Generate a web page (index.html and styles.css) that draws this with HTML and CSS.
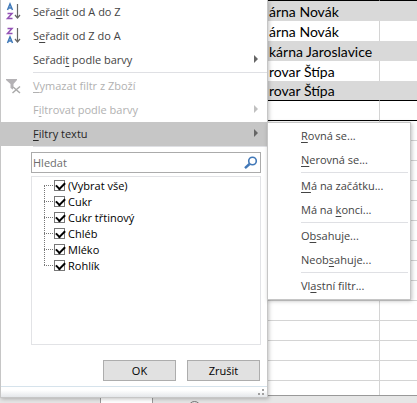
FILE: index.html
```html
<!DOCTYPE html>
<html lang="cs">
    <head>
        <meta charset="UTF-8" />
        <meta
            name="viewport"
            content="width=device-width, initial-scale=1.0"
        />
        <title>Filtr</title>
        <link rel="stylesheet" href="styles.css">
    </head>
    <body>
        <table class="sheet">
            <tr class="band first">
                <td>árna Novák</td>
                <td></td>
            </tr>
            <tr>
                <td>árna Novák</td>
                <td></td>
            </tr>
            <tr class="band">
                <td>kárna Jaroslavice</td>
                <td></td>
            </tr>
            <tr>
                <td>rovar Štípa</td>
                <td></td>
            </tr>
            <tr class="band last">
                <td>rovar Štípa</td>
                <td></td>
            </tr>
            <tr class="total">
                <td></td>
                <td></td>
            </tr>
            <tr class="empty"><td></td><td></td></tr>
            <tr class="empty"><td></td><td></td></tr>
            <tr class="empty"><td></td><td></td></tr>
            <tr class="empty"><td></td><td></td></tr>
            <tr class="empty"><td></td><td></td></tr>
            <tr class="empty"><td></td><td></td></tr>
            <tr class="empty"><td></td><td></td></tr>
            <tr class="empty"><td></td><td></td></tr>
            <tr class="empty"><td></td><td></td></tr>
            <tr class="empty"><td></td><td></td></tr>
            <tr class="empty"><td></td><td></td></tr>
            <tr class="empty"><td></td><td></td></tr>
            <tr class="empty"><td></td><td></td></tr>
            <tr class="cut"><td></td><td></td></tr>
        </table>
        <div class="tabs">
            <div class="tab"></div>
            <div class="new-tab"></div>
        </div>

        <div class="menu filter-menu">
            <button class="item" type="button">
                <svg class="icon" width="20" height="20" viewBox="0 0 20 20" fill="none">
                    <path d="M2.500 8 5 2 7.500 8M3.500 6h3" stroke="#3e78b8" stroke-width="1.500" />
                    <path d="M2.500 11.500h4.500L2.500 16.500h5" stroke="#9352b5" stroke-width="1.500" />
                    <path d="M12.500 2v14M10 13l2.500 3 2.500-3" stroke="#666" stroke-width="1.200" />
                </svg>
                <span>Seřa<u>d</u>it od A do Z</span>
            </button>
            <button class="item" type="button">
                <svg class="icon" width="20" height="20" viewBox="0 0 20 20" fill="none">
                    <path d="M2.500 2.500h4.500L2.500 7.500h5" stroke="#9352b5" stroke-width="1.500" />
                    <path d="M2.500 17 5 11l2.500 6M3.500 15h3" stroke="#3e78b8" stroke-width="1.500" />
                    <path d="M12.500 2v14M10 13l2.500 3 2.500-3" stroke="#666" stroke-width="1.200" />
                </svg>
                <span>S<u>e</u>řadit od Z do A</span>
            </button>
            <button class="item more" type="button"><span>Seřadi<u>t</u> podle barvy</span></button>
            <hr />
            <button class="item" type="button" disabled>
                <svg class="icon" width="20" height="20" viewBox="0 0 20 20" fill="none">
                    <path d="M1 3h11v1L8.500 8V14L5.500 12V8L1 4z" fill="#b4b2b5" />
                    <path d="M8 10h6v7H8z" fill="#fff" />
                    <path d="m7.500 10.500 7.500 6.500M15 10.500l-7.500 6.500" stroke="#aaa" stroke-width="1.500" />
                </svg>
                <span><u>V</u>ymazat filtr z Zboží</span>
            </button>
            <button class="item more" type="button" disabled><span>F<u>i</u>ltrovat podle barvy</span></button>
            <button class="item more active" type="button"><span><u>F</u>iltry textu</span></button>
            <hr />

            <form action="#">
                <div class="search">
                    <input type="text" name="search" placeholder="Hledat" aria-label="Hledat" />
                    <svg width="14" height="14" viewBox="0 0 14 14" fill="none" stroke="#4178b8">
                        <circle cx="8.500" cy="5" r="3.800" stroke-width="1.600" />
                        <path d="M5.500 8 1 12.200" stroke-width="2.400" />
                    </svg>
                </div>
                <div class="values">
                    <label><input type="checkbox" name="value" value="all" checked />(Vybrat vše)</label>
                    <label><input type="checkbox" name="value" value="cukr" checked />Cukr</label>
                    <label><input type="checkbox" name="value" value="cukr-trtinovy" checked />Cukr třtinový</label>
                    <label><input type="checkbox" name="value" value="chleb" checked />Chléb</label>
                    <label><input type="checkbox" name="value" value="mleko" checked />Mléko</label>
                    <label><input type="checkbox" name="value" value="rohlik" checked />Rohlík</label>
                </div>
                <div class="button-area">
                    <button type="submit">OK</button>
                    <button type="reset">Zrušit</button>
                </div>
            </form>
            <div class="resize">
                <svg width="6" height="6" viewBox="0 0 6 6" fill="#a0a0a0">
                    <path d="M4 0h2v2H4zM4 4h2v2H4zM0 4h2v2H0z" />
                </svg>
            </div>
        </div>

        <div class="menu submenu">
            <button class="item" type="button"><span><u>R</u>ovná se...</span></button>
            <button class="item" type="button"><span><u>N</u>erovná se...</span></button>
            <hr />
            <button class="item" type="button"><span><u>M</u>á na začátku...</span></button>
            <button class="item" type="button"><span>Má na <u>k</u>onci...</span></button>
            <hr />
            <button class="item" type="button"><span>O<u>b</u>sahuje...</span></button>
            <button class="item" type="button"><span>Neob<u>s</u>ahuje...</span></button>
            <hr />
            <button class="item" type="button"><span>Vl<u>a</u>stní filtr...</span></button>
        </div>
    </body>
</html>
```
FILE: styles.css
```css
* {
    box-sizing: border-box;
}

body {
    position: relative;
    margin: 0;
    overflow: hidden;
    background-color: #e6e6e6;
    font-family: "Open Sans", "Noto Sans", sans-serif;
    font-size: 11px;
}

/* sheet */
.sheet {
    width: 100%;
    table-layout: fixed;
    border-spacing: 0;
    background-color: white;
    border-bottom: 1px solid #999;
}

.sheet td {
    height: 20px;
    padding: 0;
    line-height: 19px;
    font-family: Lato, "Open Sans", sans-serif;
    font-size: 14px;
    color: black;
    white-space: nowrap;
}

.sheet td:first-child {
    width: 380px;
    padding-left: 269px;
    border-right: 1px solid #d4d4d4;
}

.sheet .band td {
    background-color: #d9d9d9;
    border-right-color: #d9d9d9;
}

.sheet .first td {
    height: 21px;
    border-top: 1px solid black;
}

.sheet .last td,
.sheet .total td {
    border-bottom: 1px solid black;
}

.sheet .empty td {
    border-bottom: 1px solid #d4d4d4;
}

.sheet .cut td {
    height: 14px;
}

.tabs {
    display: flex;
    height: 8px;
    padding-left: 100px;
}

.tab {
    width: 53px;
    background-color: white;
    border: 1px solid #999;
    border-width: 0 1px;
}

.new-tab {
    width: 13px;
    height: 13px;
    margin: 5px 0 0 35px;
    border: 1px solid #777;
    border-radius: 50%;
}

/* menus */
.menu {
    position: absolute;
    background-color: white;
    border: 1px solid #c6c6c6;
    box-shadow: 1px 1px 4px rgba(0, 0, 0, 0.25);
}

.filter-menu {
    top: 0;
    left: 0;
    width: 268px;
    border-top: none;
}

.submenu {
    top: 122px;
    left: 267px;
    width: 144px;
    padding: 1px;
}

.item {
    display: flex;
    align-items: center;
    position: relative;
    width: 100%;
    height: 24px;
    padding: 0 9px 2px 32px;
    border: none;
    background: none;
    font: inherit;
    color: #444;
    text-align: left;
    white-space: nowrap;
}

.item:disabled {
    color: #b1b1b1;
}

.item.active {
    background-color: #c6c6c6;
    color: #262626;
}

.item u {
    text-underline-offset: 2px;
}

.icon {
    position: absolute;
    left: 4px;
    top: 2px;
}

.more::after {
    content: "";
    margin-left: auto;
    border: 4px solid transparent;
    border-left-color: #666;
    border-right: none;
}

.more:disabled::after {
    border-left-color: #c0c0c0;
}

.menu hr {
    height: 2px;
    margin: 0 0 0 32px;
    border: none;
    border-top: 1px solid #dfe0e4;
}

.submenu hr {
    margin-right: 1px;
}

form {
    padding: 4px 6px 5px 30px;
}

.search {
    display: flex;
    align-items: center;
    height: 21px;
    padding-right: 2px;
    border: 1px solid #ababab;
}

.search input {
    flex: 1;
    min-width: 0;
    padding: 0 1px;
    border: none;
    outline: none;
    font: inherit;
}

.search input::placeholder {
    color: #6d6d6d;
}

/* value tree */
.values {
    height: 169px;
    margin-top: 3px;
    padding: 0 12px;
    border: 1px solid #e2e3e6;
}

.values label {
    display: flex;
    align-items: center;
    position: relative;
    height: 16px;
    padding-left: 10px;
    color: black;
}

/* dotted branches */
.values label::before,
.values label::after {
    content: "";
    position: absolute;
    left: 0;
}

.values label::before {
    top: 8px;
    width: 9px;
    border-top: 1px dotted #777;
}

.values label::after {
    top: 8px;
    height: 16px;
    border-left: 1px dotted #777;
}

.values label:last-child::after {
    display: none;
}

.values input {
    appearance: none;
    flex: none;
    width: 11px;
    height: 11px;
    margin: 0 3px 0 0;
    border: 1px solid #777;
    background-color: white;
}

.values input:checked::before {
    content: "";
    display: block;
    width: 7px;
    height: 4px;
    margin: 1px;
    border: solid black;
    border-width: 0 0 2px 2px;
    transform: rotate(-45deg);
}

.button-area {
    display: flex;
    justify-content: flex-end;
    gap: 11px;
    margin: 15px 1px 0 0;
}

.button-area button {
    width: 73px;
    height: 21px;
    padding: 0;
    border: 1px solid #adadad;
    background-color: #e1e1e1;
    font: inherit;
    color: black;
}

.resize {
    display: flex;
    justify-content: flex-end;
    align-items: flex-end;
    height: 11px;
    padding: 0 3px 2px 0;
    border-top: 1px solid #d6e3ec;
    background: linear-gradient(white 30%, #e4e7ea);
}
```
